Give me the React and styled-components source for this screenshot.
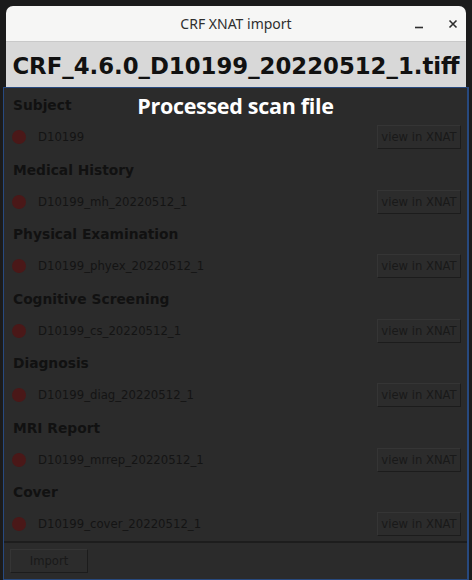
import React from 'react';
import styled, { createGlobalStyle } from 'styled-components';

const GlobalStyle = createGlobalStyle`
  html, body {
    margin: 0;
    padding: 0;
    background: #1b1b1b;
  }
  body {
    width: 472px;
    height: 580px;
    overflow: hidden;
  }
`;

const sections = [
  { title: 'Subject', file: 'D10199' },
  { title: 'Medical History', file: 'D10199_mh_20220512_1' },
  { title: 'Physical Examination', file: 'D10199_phyex_20220512_1' },
  { title: 'Cognitive Screening', file: 'D10199_cs_20220512_1' },
  { title: 'Diagnosis', file: 'D10199_diag_20220512_1' },
  { title: 'MRI Report', file: 'D10199_mrrep_20220512_1' },
  { title: 'Cover', file: 'D10199_cover_20220512_1' },
];

const App = () => {
  return (
    <>
      <GlobalStyle />
      <Frame>
        <Window>
          <TitleBar>
            <span className="title">CRF XNAT import</span>
            <span className="controls">
              <svg width="9" height="10" viewBox="0 0 9 10">
                <path d="M0 8.5 H8" stroke="#2e2e2e" strokeWidth="1.6" />
              </svg>
              <svg width="10" height="10" viewBox="0 0 10 10">
                <path d="M1.5 1.5 L8.5 8.5 M8.5 1.5 L1.5 8.5" stroke="#2e2e2e" strokeWidth="1.6" />
              </svg>
            </span>
          </TitleBar>
          <Header>CRF_4.6.0_D10199_20220512_1.tiff</Header>
          <Panel>
            <Overlay>Processed scan file</Overlay>
            {sections.map((s) => (
              <Section key={s.title}>
                <SectionTitle>{s.title}</SectionTitle>
                <Row>
                  <Dot />
                  <FileName>{s.file}</FileName>
                  <Button $wide>view in XNAT</Button>
                </Row>
              </Section>
            ))}
            <Footer>
              <Button>Import</Button>
            </Footer>
          </Panel>
        </Window>
      </Frame>
    </>
  );
};

const Frame = styled.div`
  width: 472px;
  height: 580px;
  box-sizing: border-box;
  padding: 6px 6px 0 6px;
  background: #1b1b1b;
`;

const Window = styled.div`
  display: flex;
  flex-direction: column;
`;

const TitleBar = styled.div`
  height: 35px;
  background: #f6f6f5;
  border-radius: 7px 7px 0 0;
  border-bottom: 1px solid #c9c9c9;
  position: relative;
  display: flex;
  align-items: center;
  justify-content: center;
  font-family: "Noto Sans", sans-serif;
  font-size: 14px;
  color: #2e2e2e;

  .controls {
    position: absolute;
    right: 8px;
    top: 0;
    height: 100%;
    display: flex;
    align-items: center;
    gap: 24px;
  }
`;

const Header = styled.div`
  height: 45px;
  background: #d8d8d8;
  display: flex;
  align-items: center;
  justify-content: center;
  padding-top: 3px;
  box-sizing: border-box;
  font-family: "DejaVu Sans", sans-serif;
  font-weight: bold;
  font-size: 22.8px;
  color: #111;
  white-space: nowrap;
`;

const Panel = styled.div`
  position: relative;
  margin: 0 -3px;
  height: 490px;
  background: #2b2b2b;
  border: 1px solid #27497f;
  border-right-width: 2px;
  display: flex;
  flex-direction: column;
  padding: 1px 6px 0 8px;
  font-family: "DejaVu Sans", sans-serif;
`;

const Overlay = styled.div`
  position: absolute;
  top: 3px;
  left: 0;
  right: 0;
  text-align: center;
  font-family: "Open Sans", sans-serif;
  font-weight: bold;
  font-size: 21.5px;
  color: #fff;
  letter-spacing: -0.3px;
`;

const Section = styled.div`
  height: 64.5px;
  display: flex;
  flex-direction: column;
`;

const SectionTitle = styled.div`
  height: 32px;
  display: flex;
  align-items: center;
  padding-left: 1px;
  font-weight: bold;
  font-size: 13.8px;
  color: #111;
`;

const Row = styled.div`
  height: 32.5px;
  display: flex;
  align-items: center;
`;

const Dot = styled.div`
  width: 14px;
  height: 14px;
  border-radius: 50%;
  background: #4a1818;
  margin: 0 12px 0 0;
`;

const FileName = styled.div`
  flex: 1;
  font-size: 11.7px;
  color: #141414;
`;

const Button = styled.div`
  height: 24px;
  box-sizing: border-box;
  width: ${(p) => (p.$wide ? '84px' : '78px')};
  display: flex;
  align-items: center;
  justify-content: center;
  font-family: "DejaVu Sans", sans-serif;
  font-size: 11.6px;
  color: #191919;
  background: #2c2c2c;
  border: 1px solid #353535;
  border-right-color: #1c1c1c;
  border-bottom-color: #1c1c1c;
`;

const Footer = styled.div`
  border-top: 2px solid #1d1d1d;
  margin: 0 -6px 0 -8px;
  padding: 6px 0 0 6px;
  flex: 1;
`;

export default App;
